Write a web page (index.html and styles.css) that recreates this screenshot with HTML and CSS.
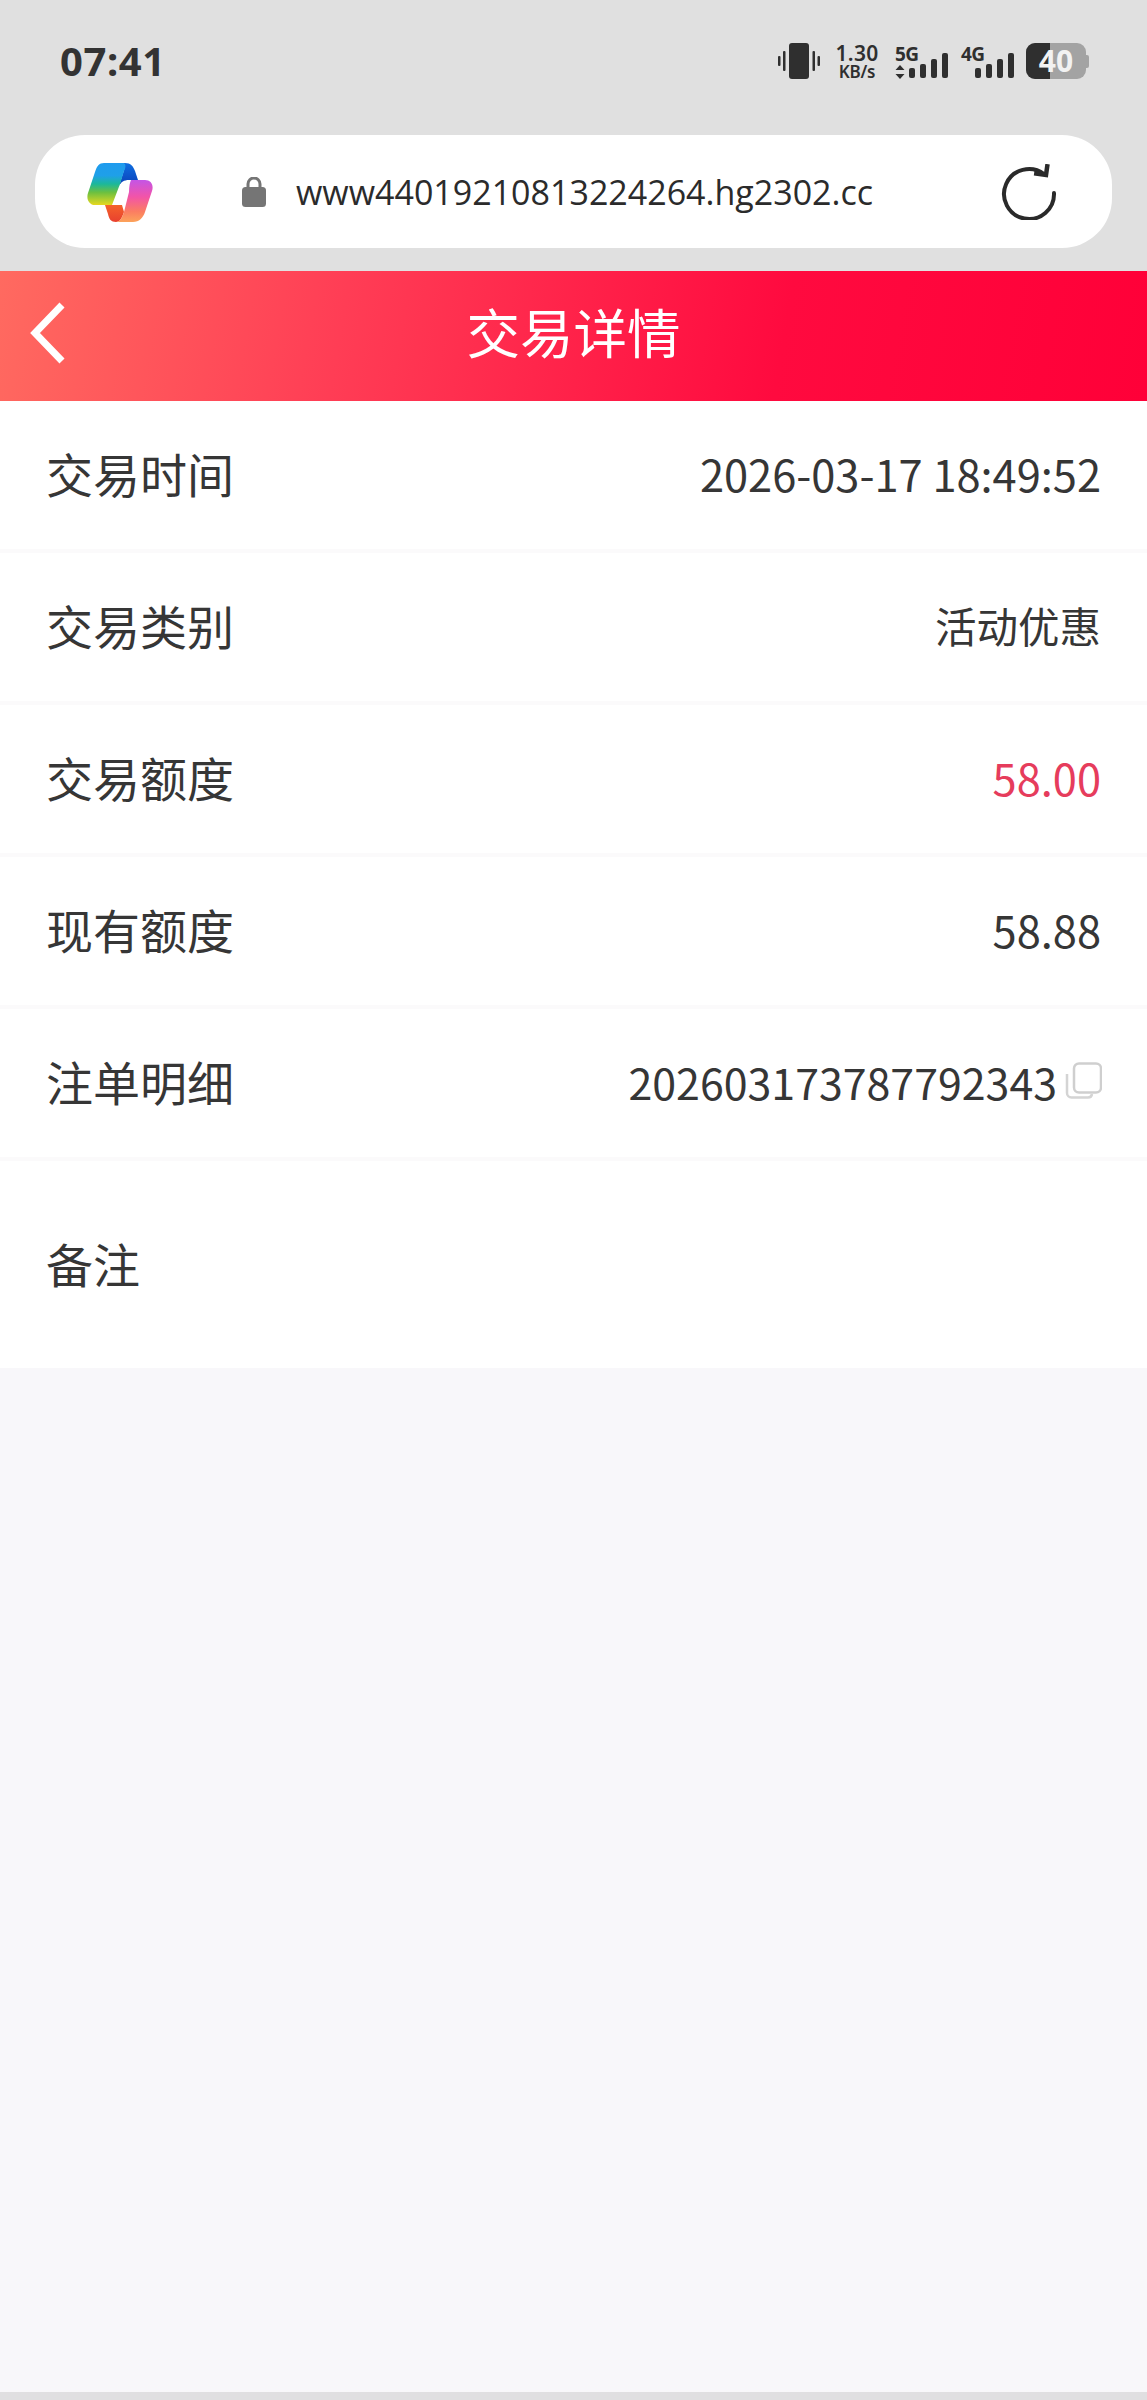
FILE: index.html
```html
<!DOCTYPE html>
<html lang="zh-CN">
<head>
<meta charset="utf-8">
<title>交易详情</title>
<link rel="stylesheet" href="styles.css">
</head>
<body>
<div class="page">
  <div class="chrome">
    <div class="status">
      <span class="clock">07:41</span>
      <div class="indicators">
        <svg class="vibrate" width="42" height="36" viewBox="0 0 42 36">
          <rect x="11" y="0" width="20" height="36" rx="3" fill="#2f2f2f"/>
          <rect x="0" y="13" width="2.5" height="10" rx="1" fill="#2f2f2f"/>
          <rect x="5" y="8" width="2.5" height="20" rx="1" fill="#2f2f2f"/>
          <rect x="34.5" y="8" width="2.5" height="20" rx="1" fill="#2f2f2f"/>
          <rect x="39.5" y="13" width="2.5" height="10" rx="1" fill="#2f2f2f"/>
        </svg>
        <div class="speed">
          <span class="speed-num">1.30</span>
          <span class="speed-unit">KB/s</span>
        </div>
        <div class="net net-5g">
          <svg width="55" height="36" viewBox="0 0 55 36">
            <path d="M5 22 L9.5 27 H0.5Z M5 36 L9.5 31 H0.5Z" fill="#2f2f2f"/>
            <rect x="14" y="25" width="6" height="10" rx="2" fill="#2f2f2f"/>
            <rect x="25" y="21" width="6" height="14" rx="2" fill="#2f2f2f"/>
            <rect x="36" y="16" width="6" height="19" rx="2" fill="#2f2f2f"/>
            <rect x="47" y="10" width="6" height="25" rx="2" fill="#2f2f2f"/>
          </svg>
          <span class="net-label">5G</span>
        </div>
        <div class="net net-4g">
          <svg width="55" height="36" viewBox="0 0 55 36">
            <rect x="14" y="25" width="6" height="10" rx="2" fill="#2f2f2f"/>
            <rect x="25" y="21" width="6" height="14" rx="2" fill="#2f2f2f"/>
            <rect x="36" y="16" width="6" height="19" rx="2" fill="#2f2f2f"/>
            <rect x="47" y="10" width="6" height="25" rx="2" fill="#2f2f2f"/>
          </svg>
          <span class="net-label">4G</span>
        </div>
        <div class="battery">
          <div class="battery-body">
            <div class="battery-fill"></div>
            <span class="battery-num">40</span>
          </div>
          <div class="battery-cap"></div>
        </div>
      </div>
    </div>
    <div class="urlbar">
      <svg class="copilot" width="66" height="60" viewBox="0 0 66 60">
        <defs>
          <linearGradient id="cpLeft" x1="0" y1="0" x2="0" y2="1">
            <stop offset="0" stop-color="#1f9bee"/>
            <stop offset="0.3" stop-color="#1fa0e8"/>
            <stop offset="0.5" stop-color="#1cb89a"/>
            <stop offset="0.7" stop-color="#6cc040"/>
            <stop offset="1" stop-color="#e6d820"/>
          </linearGradient>
          <linearGradient id="cpFold" x1="0" y1="0" x2="0" y2="1">
            <stop offset="0" stop-color="#0f6fe0"/>
            <stop offset="1" stop-color="#0b3fb8"/>
          </linearGradient>
          <linearGradient id="cpRight" x1="0" y1="0" x2="0" y2="1">
            <stop offset="0" stop-color="#c455e6"/>
            <stop offset="0.4" stop-color="#f254a8"/>
            <stop offset="0.75" stop-color="#fb7d62"/>
            <stop offset="1" stop-color="#fca35a"/>
          </linearGradient>
          <linearGradient id="cpTail" x1="0" y1="0" x2="0" y2="1">
            <stop offset="0" stop-color="#f4632a"/>
            <stop offset="1" stop-color="#e8402f"/>
          </linearGradient>
        </defs>
        <path d="M38 1 C44 1 46 4 48 9 L51 18 H42 C37 18 34 20 32 24 L37 8 C38 5 38 2 35 1Z" fill="url(#cpFold)"/>
        <path d="M17 1 H36 C39 1 39 5 37 9 L33 22 L25 43 H8 C2 43 -1 37 1 31 L8 10 C10 4 12 1 17 1Z" fill="url(#cpLeft)"/>
        <path d="M18 43 H35 L37 50 C35 56 33 60 29 60 C24 60 22 57 21 52Z" fill="url(#cpTail)"/>
        <path d="M44 18 H58 C64 18 67 23 65 29 L58 50 C56 56 52 60 46 60 H29 C33 60 35 56 37 50 L42 30 C42 24 43 20 44 18Z" fill="url(#cpRight)"/>
      </svg>
      <svg class="lock" width="24" height="30" viewBox="0 0 24 30">
        <path d="M6 11 V7 a6 6 0 0 1 12 0 V11" fill="none" stroke="#757575" stroke-width="3"/>
        <rect x="0" y="10" width="24" height="20" rx="3.5" fill="#757575"/>
      </svg>
      <span class="url">www44019210813224264.hg2302.cc</span>
      <svg class="reload" width="56" height="56" viewBox="0 0 56 56">
        <path d="M43 10 A25 25 0 1 0 53 29" fill="none" stroke="#2a2a2a" stroke-width="4" stroke-linecap="round"/>
        <path d="M33 11 L45 11 L45 0" fill="none" stroke="#2a2a2a" stroke-width="4.5" stroke-linejoin="miter" transform="rotate(8 45 11)"/>
      </svg>
    </div>
  </div>

  <header class="topbar">
    <svg class="back" width="38" height="62" viewBox="0 0 38 62">
      <path d="M33 3 L6 31 L33 59" fill="none" stroke="#fff" stroke-width="7"/>
    </svg>
    <h1 class="title">交易详情</h1>
  </header>

  <main class="details">
    <div class="row">
      <span class="label">交易时间</span>
      <span class="value">2026-03-17 18:49:52</span>
    </div>
    <div class="row">
      <span class="label">交易类别</span>
      <span class="value value-cjk">活动优惠</span>
    </div>
    <div class="row">
      <span class="label">交易额度</span>
      <span class="value value-red">58.00</span>
    </div>
    <div class="row">
      <span class="label">现有额度</span>
      <span class="value">58.88</span>
    </div>
    <div class="row">
      <span class="label">注单明细</span>
      <span class="value value-copy">202603173787792343
        <svg class="copy" width="37" height="37" viewBox="0 0 37 37">
          <path d="M2 12 V31 a4.500 4.500 0 0 0 4.500 4.500 H23 a4 4 0 0 0 4 -3.500" fill="none" stroke="#d4d4d4" stroke-width="2.500"/>
          <rect x="9" y="1.500" width="27" height="29" rx="5" fill="#fff" stroke="#cfcfcf" stroke-width="2.500"/>
        </svg>
      </span>
    </div>
    <div class="row row-note">
      <span class="label">备注</span>
    </div>
  </main>

  <div class="filler"></div>
  <div class="bottom-strip"></div>
</div>
</body>
</html>
```

FILE: styles.css
```css
* {
  box-sizing: border-box;
}

html,
body {
  margin: 0;
  padding: 0;
}

body {
  font-family: "Noto Sans CJK SC", "Noto Sans", sans-serif;
  color: #363636;
}

.page {
  display: flex;
  flex-direction: column;
  min-height: 100vh;
  background: #f8f7fa;
}

/* System status area and browser address bar */
.chrome {
  height: 271px;
  background: #e0e0e0;
  padding-top: 43px;
}

.status {
  display: flex;
  align-items: center;
  justify-content: space-between;
  height: 36px;
  padding: 0 58px 0 60px;
}

.clock {
  font-family: "Noto Sans", sans-serif;
  font-size: 40px;
  font-weight: 700;
  line-height: 36px;
  letter-spacing: 0.6px;
  color: #333;
}

.indicators {
  display: flex;
  align-items: center;
}

.vibrate {
  display: block;
  margin-right: 16px;
}

.speed {
  display: flex;
  flex-direction: column;
  align-items: center;
  width: 42px;
  margin-right: 17px;
  font-family: "Noto Sans", sans-serif;
  color: #2f2f2f;
}

.speed-num {
  font-size: 21px;
  font-weight: 600;
  line-height: 21px;
  letter-spacing: 0.3px;
}

.speed-unit {
  font-size: 17px;
  font-weight: 600;
  line-height: 16px;
  letter-spacing: -0.2px;
}

.net {
  position: relative;
  width: 55px;
  height: 36px;
}

.net svg {
  display: block;
}

.net-5g {
  margin-right: 11px;
}

.net-4g {
  margin-right: 10px;
}

.net-label {
  position: absolute;
  left: 0;
  top: 1px;
  font-family: "Noto Sans", sans-serif;
  font-size: 19px;
  font-weight: 700;
  line-height: 20px;
  letter-spacing: -0.5px;
  color: #2f2f2f;
}

.battery {
  display: flex;
  align-items: center;
}

.battery-body {
  position: relative;
  width: 60px;
  height: 36px;
  border-radius: 9px;
  background: #a3a3a3;
}

.battery-fill {
  width: 24px;
  height: 100%;
  border-radius: 9px 0 0 9px;
  background: #2f2f2f;
}

.battery-num {
  position: absolute;
  left: 0;
  right: 0;
  top: 0;
  text-align: center;
  font-family: "Noto Sans", sans-serif;
  font-size: 30px;
  font-weight: 700;
  line-height: 36px;
  color: #f2f2f2;
}

.battery-cap {
  width: 3px;
  height: 13px;
  border-radius: 0 2px 2px 0;
  background: #a3a3a3;
}

.urlbar {
  display: flex;
  align-items: center;
  height: 113px;
  margin: 56px 35px 0;
  padding: 0 0 0 52px;
  border-radius: 50px;
  background: #fff;
}

.copilot {
  display: block;
  flex: none;
}

.lock {
  display: block;
  flex: none;
  margin-left: 89px;
  margin-top: 1px;
}

.url {
  margin-left: 30px;
  font-family: "Open Sans", sans-serif;
  font-size: 34px;
  line-height: 40px;
  color: #2b2b2b;
  white-space: nowrap;
}

.reload {
  display: block;
  flex: none;
  margin-left: auto;
  margin-right: 55px;
}

/* Red page header */
.topbar {
  position: relative;
  display: flex;
  align-items: center;
  justify-content: center;
  height: 130px;
  padding-bottom: 10px;
  background: linear-gradient(100deg, #ff6a60 0%, #ff3d55 30%, #ff0a3f 68%, #ff0038 100%);
}

.back {
  position: absolute;
  left: 29px;
  top: 31px;
}

.title {
  margin: 0;
  font-size: 53.500px;
  font-weight: 400;
  line-height: 60px;
  color: #fff;
}

/* Detail rows */
.details {
  background: #fff;
}

.row {
  display: flex;
  align-items: center;
  justify-content: space-between;
  height: 152px;
  padding: 0 46px 5px;
  border-bottom: 4px solid #fbfafb;
}

.row-note {
  height: 207px;
  padding-top: 69px;
  padding-bottom: 0;
  border-bottom: 0;
  align-items: flex-start;
}

.label {
  font-size: 47px;
  line-height: 66px;
  color: #363636;
}

.value {
  font-size: 43.400px;
  line-height: 60px;
  color: #363636;
}

.value-cjk {
  font-size: 41.500px;
}

.value-red {
  color: #e63c5c;
}

.value-copy {
  display: flex;
  align-items: center;
  gap: 8px;
  font-size: 42.900px;
}

.copy {
  display: block;
  flex: none;
  margin-right: -1px;
}

.filler {
  flex: 1;
}

.bottom-strip {
  height: 8px;
  background: #e0dfe1;
}
```
